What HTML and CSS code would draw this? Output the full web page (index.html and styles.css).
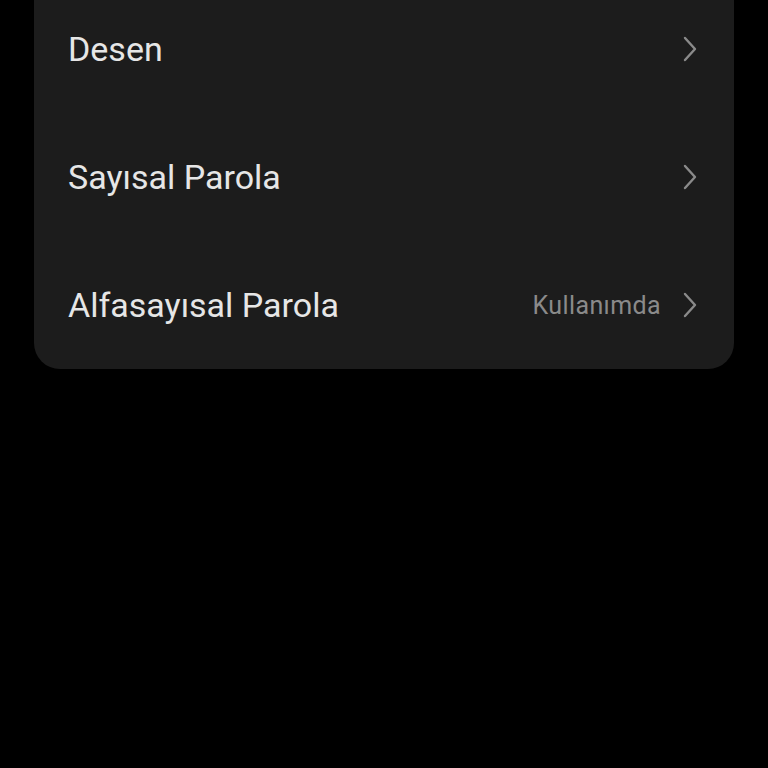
FILE: index.html
```html
<!DOCTYPE html>
<html lang="tr">
<head>
    <meta charset="UTF-8">
    <meta name="viewport" content="width=device-width, initial-scale=1.0">
    <title>Ekran kilidi türü</title>
    <link rel="stylesheet" href="styles.css">
</head>
<body>
    <div class="card">
        <div class="row">
            <span class="label">Desen</span>
            <span class="chevron"><svg viewBox="0 0 14 26" width="14" height="26"><path d="M2 2 L12 13 L2 24" /></svg></span>
        </div>
        <div class="row">
            <span class="label">Sayısal Parola</span>
            <span class="chevron"><svg viewBox="0 0 14 26" width="14" height="26"><path d="M2 2 L12 13 L2 24" /></svg></span>
        </div>
        <div class="row">
            <span class="label">Alfasayısal Parola</span>
            <span class="status">Kullanımda</span>
            <span class="chevron"><svg viewBox="0 0 14 26" width="14" height="26"><path d="M2 2 L12 13 L2 24" /></svg></span>
        </div>
    </div>
</body>
</html>
```

FILE: styles.css
```css
:root {
    --bg: #000000;
    --card: #1c1c1c;
    --text: #e6e6e6;
    --muted: #8a8a8a;
}

body {
    margin: 0;
    background-color: var(--bg);
    font-family: Roboto, "Noto Sans", sans-serif;
    height: 768px;
    overflow: hidden;
}

.card {
    background-color: var(--card);
    margin: -15px 34px 0;
    border-radius: 0 0 26px 26px;
}

.row {
    height: 128px;
    display: flex;
    align-items: center;
    padding: 0 37px 0 34px;
}

.label {
    flex: 1;
    color: var(--text);
    font-size: 34px;
}

.status {
    color: var(--muted);
    font-size: 25px;
    letter-spacing: 0.4px;
    margin-right: 22px;
}

.chevron {
    display: flex;
}

.chevron path {
    fill: none;
    stroke: var(--muted);
    stroke-width: 2.4;
    stroke-linecap: round;
    stroke-linejoin: round;
}
```
